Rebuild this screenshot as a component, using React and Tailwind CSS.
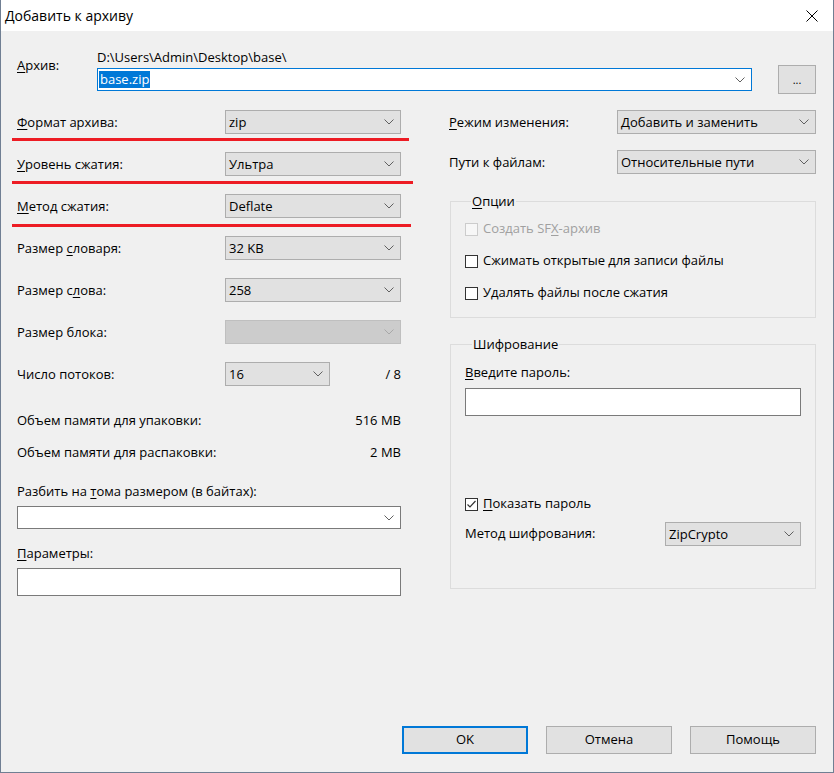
const Chevron = ({ color = "#606060" }) => (
  <svg width="10" height="6" viewBox="0 0 10 6" className="shrink-0">
    <polyline points="0.5,0.5 5,5 9.5,0.5" fill="none" stroke={color} strokeWidth="1" />
  </svg>
);

const U = ({ children }) => <span className="underline underline-offset-2">{children}</span>;

const Combo = ({ value, className = "", variant = "gray" }) => {
  const styles = {
    gray: "bg-[#e1e1e1] border-[#adadad]",
    white: "bg-white border-[#7a7a7a]",
    disabled: "bg-[#cccccc] border-[#bfbfbf]",
  };
  return (
    <div className={`flex items-center justify-between border pl-[3px] pr-[6px] ${styles[variant]} ${className}`}>
      <span className="leading-[16px]">{value}</span>
      <Chevron color={variant === "disabled" ? "#a8a8a8" : "#606060"} />
    </div>
  );
};

const Check = ({ checked, disabled }) => (
  <div
    className={`w-[13px] h-[13px] border flex items-center justify-center shrink-0 ${
      disabled ? "border-[#cccccc] bg-[#f7f7f7]" : "border-[#333333] bg-white"
    }`}
  >
    {checked && (
      <svg width="11" height="11" viewBox="0 0 11 11">
        <polyline points="1.5,5.5 4,8 9.5,2" fill="none" stroke="#333" strokeWidth="1.2" />
      </svg>
    )}
  </div>
);

const RedLine = ({ top, width }) => (
  <div className={`absolute left-[-5px] h-[3px] bg-[#ed1c24] ${top} ${width}`} />
);

const Row = ({ label, children, line }) => (
  <div className="relative flex items-center h-[24px]">
    <span className="flex-1 leading-[16px]">{label}</span>
    {children}
    {line}
  </div>
);

const Btn = ({ children, primary }) => (
  <button
    className={`w-[126px] h-[28px] bg-[#e1e1e1] ${
      primary ? "border-2 border-[#0078d7]" : "border border-[#adadad]"
    }`}
  >
    {children}
  </button>
);

export default function App() {
  return (
    <div
      className="w-[834px] h-[773px] flex flex-col border-x border-b border-[#707f93] text-[13px] text-black"
      style={{ fontFamily: '"Open Sans", "Liberation Sans", Arial, sans-serif' }}
    >
      {/* title bar */}
      <div className="h-[31px] bg-white flex items-center justify-between pl-[4px] pr-[15px]">
        <span className="text-[14px]">Добавить к архиву</span>
        <svg width="12" height="12" viewBox="0 0 12 12">
          <path d="M0.5 0.5 L11.5 11.5 M11.5 0.5 L0.5 11.5" stroke="#000" strokeWidth="1" />
        </svg>
      </div>

      <div className="flex-1 bg-[#f0f0f0] flex flex-col pl-[16px] pr-[17px] pt-[18px] pb-[18px]">
        {/* archive */}
        <div className="flex">
          <div className="w-[80px] pt-[8px] leading-[16px]">
            <U>А</U>рхив:
          </div>
          <div className="flex-1 flex flex-col">
            <div className="leading-[16px]">D:\Users\Admin\Desktop\base\</div>
            <div className="flex items-center">
              <div className="flex-1 h-[23px] bg-white border border-[#0078d7] flex items-center justify-between pl-[1px] pr-[6px]">
                <span className="bg-[#0078d7] text-white leading-[17px] px-[1px]">base.zip</span>
                <Chevron />
              </div>
              <button className="ml-[26px] w-[38px] h-[29px] bg-[#e1e1e1] border border-[#adadad] text-[11px] leading-none">
                ...
              </button>
            </div>
          </div>
        </div>

        <div className="flex mt-[16px]">
          {/* left column */}
          <div className="w-[384px] flex flex-col">
            <div className="flex flex-col gap-[18px]">
              <Row
                label={<><U>Ф</U>ормат архива:</>}
                line={<RedLine top="top-[28px]" width="w-[397px]" />}
              >
                <Combo value="zip" className="w-[176px] h-full" />
              </Row>
              <Row
                label={<><U>У</U>ровень сжатия:</>}
                line={<RedLine top="top-[29px]" width="w-[401px]" />}
              >
                <Combo value="Ультра" className="w-[176px] h-full" />
              </Row>
              <Row
                label={<><U>М</U>етод сжатия:</>}
                line={<RedLine top="top-[30px]" width="w-[399px]" />}
              >
                <Combo value="Deflate" className="w-[176px] h-full" />
              </Row>
              <Row label={<>Размер <U>с</U>ловаря:</>}>
                <Combo value="32 KB" className="w-[176px] h-full" />
              </Row>
              <Row label={<>Размер с<U>л</U>ова:</>}>
                <Combo value="258" className="w-[176px] h-full" />
              </Row>
              <Row label="Размер блока:">
                <Combo value="" variant="disabled" className="w-[176px] h-full" />
              </Row>
              <Row label="Число потоков:">
                <Combo value="16" className="w-[105px] h-full" />
                <span className="w-[71px] text-right leading-[16px]">/ 8</span>
              </Row>
            </div>

            <div className="mt-[26px] flex justify-between leading-[16px]">
              <span>Объем памяти для упаковки:</span>
              <span>516 MB</span>
            </div>
            <div className="mt-[16px] flex justify-between leading-[16px]">
              <span>Объем памяти для распаковки:</span>
              <span>2 MB</span>
            </div>

            <div className="mt-[23px] leading-[16px]">
              Разбить на <U>т</U>ома размером (в байтах):
            </div>
            <Combo value="" variant="white" className="mt-[7px] h-[23px]" />

            <div className="mt-[16px] leading-[16px]">
              <U>П</U>араметры:
            </div>
            <div className="mt-[7px] h-[28px] bg-white border border-[#7a7a7a]" />
          </div>

          {/* right column */}
          <div className="ml-[48px] flex-1 flex flex-col">
            <div className="flex flex-col gap-[16px]">
              <Row label={<><U>Р</U>ежим изменения:</>}>
                <Combo value="Добавить и заменить" className="w-[199px] h-full" />
              </Row>
              <Row label="Пути к файлам:">
                <Combo value="Относительные пути" className="w-[199px] h-full" />
              </Row>
            </div>

            <fieldset className="mt-[19px] ml-[1px] border border-[#dcdcdc] pl-[14px] pr-[14px] pt-[12px] pb-[16px] flex flex-col gap-[16px]">
              <legend className="ml-[6px] px-[1px] leading-[16px]">
                <U>О</U>пции
              </legend>
              <label className="flex items-center gap-[5px] h-[16px] text-[#a0a0a0]">
                <Check disabled />
                <span>
                  Создать SF<U>X</U>-архив
                </span>
              </label>
              <label className="flex items-center gap-[5px] h-[16px]">
                <Check />
                <span>Сжимать открытые для записи файлы</span>
              </label>
              <label className="flex items-center gap-[5px] h-[16px]">
                <Check />
                <span>Удалять файлы после сжатия</span>
              </label>
            </fieldset>

            <fieldset className="mt-[18px] ml-[1px] border border-[#dcdcdc] pl-[14px] pr-[14px] pt-[12px] pb-[42px] flex flex-col">
              <legend className="ml-[7px] px-[1px] leading-[16px]">Шифрование</legend>
              <div className="leading-[16px]">
                <U>В</U>ведите пароль:
              </div>
              <div className="mt-[8px] h-[28px] bg-white border border-[#7a7a7a]" />
              <label className="mt-[80px] flex items-center gap-[5px] h-[16px]">
                <Check checked />
                <span>
                  <U>П</U>оказать пароль
                </span>
              </label>
              <div className="mt-[10px] flex items-center h-[24px]">
                <span className="flex-1">Метод шифрования:</span>
                <Combo value="ZipCrypto" className="w-[136px] h-full" />
              </div>
            </fieldset>
          </div>
        </div>

        {/* buttons */}
        <div className="mt-auto flex justify-end gap-[18px]">
          <Btn primary>OK</Btn>
          <Btn>Отмена</Btn>
          <Btn>Помощь</Btn>
        </div>
      </div>
    </div>
  );
}
